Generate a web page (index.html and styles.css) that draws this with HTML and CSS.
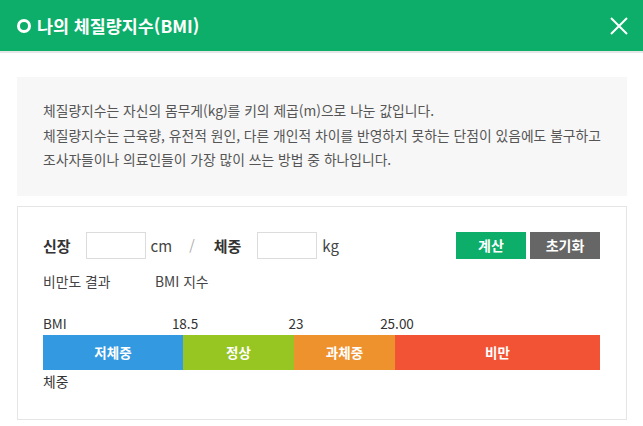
FILE: index.html
```html
<!DOCTYPE html>
<html lang="ko">
<head>
<meta charset="utf-8">
<title>나의 체질량지수(BMI)</title>
<link rel="stylesheet" href="styles.css">
</head>
<body>
<div class="modal">
  <header class="modal-head">
    <h1 class="title"><span class="ring"></span>나의 체질량지수(BMI)</h1>
    <button class="close" type="button" aria-label="닫기">
      <svg width="18" height="18" viewBox="0 0 18 18"><path d="M1 1 L17 17 M17 1 L1 17" stroke="#fff" stroke-width="2" fill="none"/></svg>
    </button>
  </header>
  <div class="modal-body">
    <div class="info">
      <p>체질량지수는 자신의 몸무게(kg)를 키의 제곱(m)으로 나눈 값입니다.</p>
      <p>체질량지수는 근육량, 유전적 원인, 다른 개인적 차이를 반영하지 못하는 단점이 있음에도 불구하고</p>
      <p>조사자들이나 의료인들이 가장 많이 쓰는 방법 중 하나입니다.</p>
    </div>
    <div class="calc">
      <div class="input-row">
        <div class="fields">
          <label class="field-label">신장</label>
          <input class="num" type="text">
          <span class="unit">cm</span>
          <span class="slash">/</span>
          <label class="field-label weight">체중</label>
          <input class="num" type="text">
          <span class="unit">kg</span>
        </div>
        <div class="buttons">
          <button class="btn btn-calc" type="button">계산</button>
          <button class="btn btn-reset" type="button">초기화</button>
        </div>
      </div>
      <div class="result-row">
        <span class="result-label">비만도 결과</span>
        <span>BMI 지수</span>
      </div>
      <div class="ticks">
        <div class="cell c1"><span>BMI</span><span class="tick">18.5</span></div>
        <div class="cell c2"><span class="tick">23</span></div>
        <div class="cell c3"><span class="tick">25.00</span></div>
        <div class="cell c4"></div>
      </div>
      <div class="bar">
        <div class="seg c1 under">저체중</div>
        <div class="seg c2 normal">정상</div>
        <div class="seg c3 over">과체중</div>
        <div class="seg c4 obese">비만</div>
      </div>
      <div class="weight-row">체중</div>
    </div>
  </div>
</div>
</body>
</html>
```
FILE: styles.css
```css
* { box-sizing: border-box; }
html, body { margin: 0; padding: 0; background: #fff; }
body {
  font-family: "Noto Sans CJK KR", "Noto Sans", sans-serif;
  color: #444;
  width: 643px;
}
.modal-head {
  height: 53px;
  background: #0cae6a;
  border-bottom: 2px solid #e6e6e6;
  display: flex;
  align-items: center;
  justify-content: space-between;
  padding: 0 15px 0 17px;
}
.title {
  margin: 0;
  color: #fff;
  font-size: 17.4px;
  font-weight: 700;
  display: flex;
  align-items: center;
  line-height: 24px;
}
.ring {
  width: 14px;
  height: 14px;
  border: 3px solid #fff;
  border-radius: 50%;
  margin-right: 6px;
  margin-top: 1px;
}
.close {
  background: none;
  border: 0;
  padding: 0;
  width: 18px;
  height: 18px;
  display: flex;
}
.modal-body {
  padding: 24px 16px 0 17px;
}
.info {
  background: #f7f7f7;
  padding: 21px 20px 24px 26px;
  font-size: 13.8px;
  line-height: 24.5px;
  color: #555;
}
.info p { margin: 0; white-space: nowrap; }
.calc {
  margin-top: 10px;
  border: 1px solid #e5e5e5;
  padding: 25px 26px 28px 25px;
}
.input-row {
  display: flex;
  justify-content: space-between;
  align-items: center;
  height: 27px;
}
.fields { display: flex; align-items: center; }
.field-label {
  font-size: 15px;
  font-weight: 700;
  color: #333;
  margin-right: 15px;
}
.field-label.weight { margin-right: 16px; }
.num {
  width: 60px;
  height: 27px;
  border: 1px solid #dcdcdc;
  background: #fff;
  padding: 0;
  margin: 0;
}
.unit {
  font-size: 15px;
  color: #444;
  margin-left: 5px;
}
.slash {
  font-size: 14px;
  color: #aaa;
  margin: 0 19px 0 17px;
}
.buttons { display: flex; gap: 4px; }
.btn {
  width: 70px;
  height: 27px;
  border: 0;
  color: #fff;
  font-family: inherit;
  font-size: 14px;
  font-weight: 700;
  padding: 0;
}
.btn-calc { background: #0cae6a; }
.btn-reset { background: #666; }
.result-row {
  margin-top: 12px;
  font-size: 13.8px;
  line-height: 20px;
  display: flex;
}
.result-label { width: 112px; }
.ticks {
  margin-top: 22px;
  margin-bottom: 2px;
  display: flex;
  font-size: 13.5px;
  line-height: 20px;
  color: #333;
}
.cell { display: flex; justify-content: flex-end; }
.ticks .c1 { justify-content: space-between; }
.tick { transform: translateX(calc(50% + 2px)); }
.c1 { width: 140px; }
.c2 { width: 111px; }
.c3 { width: 101px; }
.c4 { flex: 1; }
.bar { display: flex; height: 35px; }
.seg {
  color: #fff;
  font-size: 13.5px;
  font-weight: 700;
  display: flex;
  align-items: center;
  justify-content: center;
}
.under { background: #3399e0; }
.normal { background: #97c521; }
.over { background: #ee922e; }
.obese { background: #f15334; }
.weight-row {
  margin-top: 1px;
  font-size: 13.8px;
  line-height: 20px;
  color: #333;
}
```
